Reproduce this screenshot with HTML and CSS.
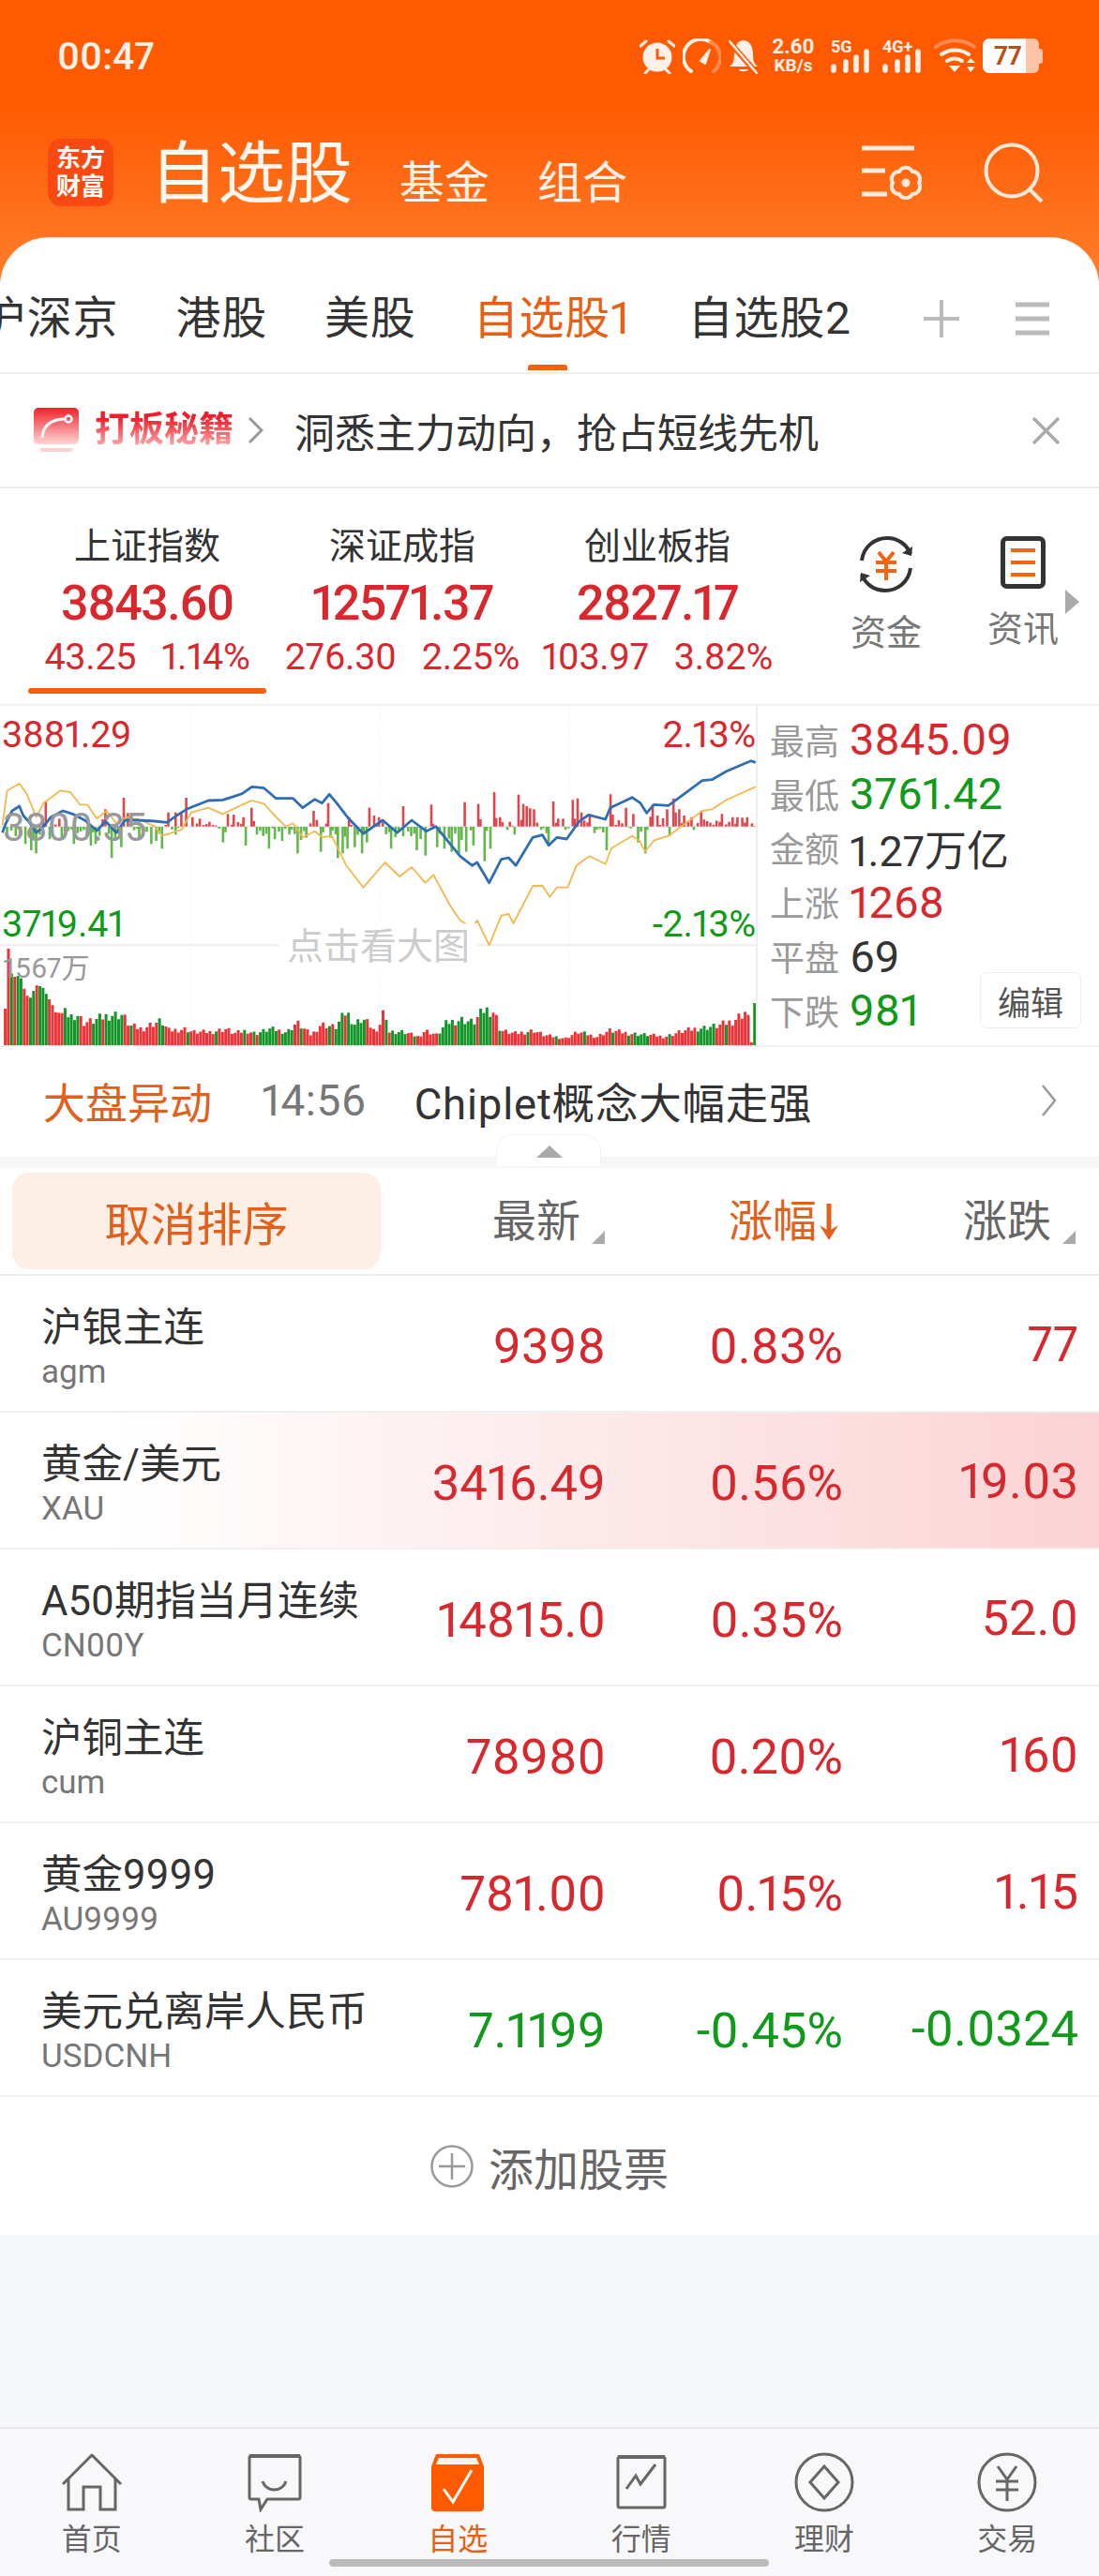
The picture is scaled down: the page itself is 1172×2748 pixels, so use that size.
FILE: index.html
```html
<!DOCTYPE html>
<html lang="zh-CN">
<head>
    <meta charset="UTF-8">
    <meta name="viewport" content="width=device-width, initial-scale=1.0">
    <title>自选股</title>
    <link rel="stylesheet" href="styles.css">
</head>
<body>
<div class="app">
    <div class="status-bar">
        <span class="clock">00:47</span>
        <div class="status-icons">
            <svg width="38" height="38" viewBox="0 0 38 38"><circle cx="19" cy="20" r="15.5" fill="#fff1ea"/><path d="M19 11v10h8" fill="none" stroke="#ff5a00" stroke-width="3"/><path d="M1 8l6-5M37 8l-6-5M6 37l4-4M32 37l-4-4" stroke="#fff1ea" stroke-width="3" stroke-linecap="round"/></svg>
            <svg class="gauge" width="41" height="38" viewBox="0 0 41 38"><path d="M9 35A18.500 18.500 0 0 1 30 4" fill="none" stroke="#fff1ea" stroke-width="4" stroke-linecap="round"/><path d="M30 4A18.500 18.500 0 0 1 33 35" fill="none" stroke="#ff8a50" stroke-width="4" stroke-linecap="round"/><path d="M19 24l10-12-5 15z" fill="#fff1ea" stroke="#fff1ea" stroke-width="2" stroke-linejoin="round"/></svg>
            <svg class="bell" width="32" height="38" viewBox="0 0 32 38"><path d="M1 30c4-3 5-6 5-14C6 7 11 2 16 2s10 5 10 14c0 8 1 11 5 14z" fill="#fff1ea"/><path d="M11 33h10c-1 3-9 3-10 0z" fill="#fff1ea"/><path d="M1 4l29 33" stroke="#ff5a00" stroke-width="6"/><path d="M1 3l29 34" stroke="#fff1ea" stroke-width="2.500" stroke-linecap="round"/></svg>
            <div class="net-speed"><span>2.60</span><span class="net-unit">KB/s</span></div>
            <svg class="signal" width="43" height="38" viewBox="0 0 43 38"><text x="0" y="15" class="signal-label">5G</text><path d="M3 30v4M16 25v9M27 20v14M38 14v20" stroke="#fff1ea" stroke-width="5.500" stroke-linecap="round"/></svg>
            <svg class="signal" width="43" height="38" viewBox="0 0 43 38"><text x="0" y="15" class="signal-label">4G+</text><path d="M3 30v4M16 25v9M27 20v14M38 14v20" stroke="#fff1ea" stroke-width="5.500" stroke-linecap="round"/></svg>
            <svg class="wifi" width="45" height="38" viewBox="0 0 45 38"><path d="M2 9c12-9 29-9 41 0" fill="none" stroke="#ff8a50" stroke-width="4" stroke-linecap="round"/><path d="M8 17c9-6 20-6 29 0M14 24c5-3 11-3 16 0" fill="none" stroke="#fff1ea" stroke-width="4" stroke-linecap="round"/><path d="M16 29h12l-6 7zM35 26l4-5 5 5zM35 30h9l-5 6z" fill="#fff1ea"/></svg>
            <div class="battery"><div class="battery-level">77</div><div class="battery-rest"></div><div class="battery-nib"></div></div>
        </div>
    </div>

    <div class="title-bar">
        <div class="logo"><span>东方</span><span>财富</span></div>
        <h1 class="page-title">自选股</h1>
        <span class="title-link">基金</span>
        <span class="title-link">组合</span>
        <div class="title-actions">
            <svg width="64" height="58" viewBox="0 0 64 58"><path d="M0 3h56M0 27h25M0 52h27" stroke="#ffeadd" stroke-width="5"/><g transform="translate(47 40)"><path d="M14 0A8 8 0 0 1 7 12A8 8 0 0 1-7 12A8 8 0 0 1-14 0A8 8 0 0 1-7-12A8 8 0 0 1 7-12A8 8 0 0 1 14 0z" fill="none" stroke="#ffeadd" stroke-width="4"/><circle r="4.500" fill="#ffeadd"/></g></svg>
            <svg width="64" height="64" viewBox="0 0 64 64"><circle cx="30" cy="30" r="27.500" fill="none" stroke="#ffeadd" stroke-width="4"/><path d="M49 50l13 13" stroke="#ffeadd" stroke-width="4"/></svg>
        </div>
    </div>

    <div class="card">
        <div class="tabs">
            <div class="tabs-list">
                <span class="tab">沪深京</span>
                <span class="tab">港股</span>
                <span class="tab">美股</span>
                <span class="tab active">自选股1</span>
                <span class="tab">自选股2</span>
            </div>
            <svg class="tab-add" width="40" height="40" viewBox="0 0 40 40"><path d="M20 0v40M1 20h38" stroke="#bbb" stroke-width="4"/></svg>
            <svg class="tab-menu" width="36" height="36" viewBox="0 0 36 36"><path d="M0 3h36M0 18h36M0 33h36" stroke="#bbb" stroke-width="5"/></svg>
        </div>

        <div class="promo">
            <svg class="promo-icon" width="48" height="48" viewBox="0 0 48 48"><defs><linearGradient id="promo-fill" x1="0" y1="0" x2="0" y2="1"><stop offset="0" stop-color="#f0202a"/><stop offset="1" stop-color="#ffd6d6"/></linearGradient></defs><rect width="48" height="39" rx="5" fill="url(#promo-fill)"/><rect x="7" y="43" width="34" height="4" rx="2" fill="#fbd0d0"/><path d="M9 32c1-12 8-20 25-20" fill="none" stroke="#fff" stroke-width="3"/><circle cx="37" cy="12" r="3.500" fill="none" stroke="#fff" stroke-width="2.500"/></svg>
            <span class="promo-brand">打板秘籍</span>
            <svg class="promo-arrow" width="17" height="30" viewBox="0 0 17 30"><path d="M2 2l13 13L2 28" fill="none" stroke="#999" stroke-width="3"/></svg>
            <span class="promo-text">洞悉主力动向，抢占短线先机</span>
            <svg class="promo-close" width="29" height="29" viewBox="0 0 29 29"><path d="M1 1l27 27M28 1L1 28" stroke="#aaa" stroke-width="3.500"/></svg>
        </div>

        <div class="indexes">
            <div class="index-item active">
                <div class="index-name">上证指数</div>
                <div class="index-value">3843.60</div>
                <div class="index-change"><span>43.25</span><span>1.14%</span></div>
            </div>
            <div class="index-item">
                <div class="index-name">深证成指</div>
                <div class="index-value">12571.37</div>
                <div class="index-change"><span>276.30</span><span>2.25%</span></div>
            </div>
            <div class="index-item">
                <div class="index-name">创业板指</div>
                <div class="index-value">2827.17</div>
                <div class="index-change"><span>103.97</span><span>3.82%</span></div>
            </div>
            <div class="index-tool tool-funds">
                <svg width="58" height="60" viewBox="0 0 58 60"><path d="M3 26C5 10 18 2 30 2c12 0 21 7 25 17M55 34C53 50 40 58 28 58 16 58 7 51 3 41" fill="none" stroke="#333" stroke-width="4"/><path d="M46 18l10 3 1-10zM12 42L2 39 1 49z" fill="#333"/><path d="M21 17l8 10 8-10M18 28h22M18 37h22M29 27v20" fill="none" stroke="#f5640f" stroke-width="4"/></svg>
                <span>资金</span>
            </div>
            <div class="index-tool tool-news">
                <svg width="48" height="56" viewBox="0 0 48 56"><rect x="2.500" y="2.500" width="43" height="51" rx="4" fill="none" stroke="#333" stroke-width="5"/><path d="M11 15h26M11 28h26M11 41h26" stroke="#f5640f" stroke-width="4"/></svg>
                <span>资讯</span>
            </div>
            <div class="tool-more"></div>
        </div>

        <div class="market">
            <div class="chart" id="chart">
                <span class="chart-label top-left up">3881.29</span>
                <span class="chart-label top-right up">2.13%</span>
                <span class="chart-label mid-left">3800.35</span>
                <span class="chart-label low-left down">3719.41</span>
                <span class="chart-label low-right down">-2.13%</span>
                <span class="chart-hint">点击看大图</span>
                <span class="chart-volume">1567万</span>
            </div>
            <div class="stats">
                <div class="stat"><span class="stat-name">最高</span><span class="up">3845.09</span></div>
                <div class="stat"><span class="stat-name">最低</span><span class="down">3761.42</span></div>
                <div class="stat"><span class="stat-name">金额</span><span class="stat-amount">1.27万亿</span></div>
                <div class="stat"><span class="stat-name">上涨</span><span class="up">1268</span></div>
                <div class="stat"><span class="stat-name">平盘</span><span>69</span></div>
                <div class="stat"><span class="stat-name">下跌</span><span class="down">981</span></div>
                <button class="edit-button">编辑</button>
            </div>
        </div>

        <div class="alert">
            <span class="alert-tag">大盘异动</span>
            <span class="alert-time">14:56</span>
            <span class="alert-text">Chiplet概念大幅走强</span>
            <svg width="17" height="34" viewBox="0 0 17 34"><path d="M2 1l13 16L2 33" fill="none" stroke="#999" stroke-width="2.500"/></svg>
            <div class="collapse-tab"></div>
        </div>

        <div class="table-head">
            <button class="cancel-sort">取消排序</button>
            <div class="col-head sortable">最新</div>
            <div class="col-head sorted">涨幅<svg width="22" height="42" viewBox="0 0 22 42"><path d="M11 2v34" stroke="#e0601c" stroke-width="5"/><path d="M1 25l10 16 10-16-10 6z" fill="#e0601c"/></svg></div>
            <div class="col-head sortable">涨跌</div>
        </div>

        <div class="quote">
            <div class="quote-name"><div>沪银主连</div><div class="quote-code">agm</div></div>
            <div class="quote-num up">9398</div>
            <div class="quote-num up">0.83%</div>
            <div class="quote-num up quote-change">77</div>
        </div>
        <div class="quote flash">
            <div class="quote-name"><div>黄金/美元</div><div class="quote-code">XAU</div></div>
            <div class="quote-num up">3416.49</div>
            <div class="quote-num up">0.56%</div>
            <div class="quote-num up quote-change">19.03</div>
        </div>
        <div class="quote">
            <div class="quote-name"><div>A50期指当月连续</div><div class="quote-code">CN00Y</div></div>
            <div class="quote-num up">14815.0</div>
            <div class="quote-num up">0.35%</div>
            <div class="quote-num up quote-change">52.0</div>
        </div>
        <div class="quote">
            <div class="quote-name"><div>沪铜主连</div><div class="quote-code">cum</div></div>
            <div class="quote-num up">78980</div>
            <div class="quote-num up">0.20%</div>
            <div class="quote-num up quote-change">160</div>
        </div>
        <div class="quote">
            <div class="quote-name"><div>黄金9999</div><div class="quote-code">AU9999</div></div>
            <div class="quote-num up">781.00</div>
            <div class="quote-num up">0.15%</div>
            <div class="quote-num up quote-change">1.15</div>
        </div>
        <div class="quote">
            <div class="quote-name"><div>美元兑离岸人民币</div><div class="quote-code">USDCNH</div></div>
            <div class="quote-num down">7.1199</div>
            <div class="quote-num down">-0.45%</div>
            <div class="quote-num down quote-change">-0.0324</div>
        </div>

        <div class="add-stock">
            <svg width="46" height="46" viewBox="0 0 46 46"><circle cx="23" cy="23" r="21.500" fill="none" stroke="#999" stroke-width="2.500"/><path d="M23 9v28M9 23h28" stroke="#999" stroke-width="2.500"/></svg>
            <span>添加股票</span>
        </div>
    </div>

    <div class="spacer"></div>

    <nav class="bottom-nav">
        <div class="nav-item">
            <svg width="64" height="62" viewBox="0 0 64 62"><path d="M1 33L32 2l31 31" fill="none" stroke="#666" stroke-width="3" stroke-linejoin="round"/><path d="M7 27v33h16V36h18v24h16V27" fill="none" stroke="#666" stroke-width="3"/></svg>
            <span>首页</span>
        </div>
        <div class="nav-item">
            <svg width="60" height="62" viewBox="0 0 60 62"><path d="M5 3h50a2 2 0 0 1 2 2v42a2 2 0 0 1-2 2H22l-7 11-2-11H5a2 2 0 0 1-2-2V5a2 2 0 0 1 2-2z" fill="none" stroke="#666" stroke-width="3"/><path d="M3 3h54" stroke="#666" stroke-width="4"/><path d="M17 30c4 12 21 12 25 0" fill="none" stroke="#666" stroke-width="3"/></svg>
            <span>社区</span>
        </div>
        <div class="nav-item active">
            <svg width="60" height="62" viewBox="0 0 60 62"><path d="M2 14L7 1h46l5 13v44a4 4 0 0 1-4 4H6a4 4 0 0 1-4-4z" fill="#ff5a00"/><path d="M7 12l3-7h40l3 7z" fill="#fff1ea"/><path d="M15 38l10 14 20-34" fill="none" stroke="#fff" stroke-width="3"/></svg>
            <span>自选</span>
        </div>
        <div class="nav-item">
            <svg width="56" height="62" viewBox="0 0 56 62"><rect x="3" y="4" width="50" height="54" rx="2" fill="none" stroke="#666" stroke-width="3"/><path d="M3 4h50" stroke="#666" stroke-width="4"/><path d="M12 38l10-14 5 9 16-21" fill="none" stroke="#666" stroke-width="3"/></svg>
            <span>行情</span>
        </div>
        <div class="nav-item">
            <svg width="64" height="64" viewBox="0 0 64 64"><circle cx="32" cy="32" r="30" fill="none" stroke="#666" stroke-width="3"/><path d="M32 15l15 17-15 17-15-17z" fill="none" stroke="#666" stroke-width="3"/></svg>
            <span>理财</span>
        </div>
        <div class="nav-item">
            <svg width="64" height="64" viewBox="0 0 64 64"><circle cx="32" cy="32" r="30" fill="none" stroke="#666" stroke-width="3"/><path d="M22 15l10 14 10-14M20 31h24M20 40h24M32 29v23" fill="none" stroke="#666" stroke-width="3"/></svg>
            <span>交易</span>
        </div>
        <div class="home-bar"></div>
    </nav>
</div>
<script src="chart.js"></script>
</body>
</html>
```

FILE: styles.css
```css
* {
    box-sizing: border-box;
}
body {
    margin: 0;
    font-family: Roboto, "Noto Sans CJK SC", sans-serif;
    font-variant-numeric: proportional-nums;
    color: #333;
    background: #f6f7f9;
}
.app {
    width: 1172px;
    height: 2748px;
    display: flex;
    flex-direction: column;
    overflow: hidden;
    background: linear-gradient(#ff5a00 0, #ff5a00 110px, #ff7d2c 300px) no-repeat;
    background-size: 100% 300px;
}
.up { color: #d8282d; }
.down { color: #0f9a1a; }

/* status bar */
.status-bar {
    display: flex;
    justify-content: space-between;
    align-items: center;
    height: 37px;
    margin-top: 41px;
    padding: 0 60px 0 61px;
}
.clock {
    font-size: 41px;
    font-weight: 500;
    color: #fff1ea;
}
.status-icons {
    display: flex;
    align-items: center;
    gap: 8px;
}
.net-speed {
    display: flex;
    flex-direction: column;
    align-items: center;
    width: 46px;
    margin: 0 9px 0 6px;
    font-size: 22px;
    font-weight: 700;
    line-height: 20px;
    color: #fff1ea;
}
.net-unit { font-size: 19px; }
.signal {
    margin-right: 4px;
    overflow: visible;
}
.signal-label {
    font-family: Roboto, sans-serif;
    font-size: 18px;
    font-weight: 700;
    fill: #fff1ea;
}
.battery {
    display: flex;
    align-items: center;
    height: 37px;
    margin-left: -1px;
}
.battery-level {
    width: 46px;
    height: 37px;
    padding-left: 12px;
    font-size: 28px;
    font-weight: 700;
    line-height: 37px;
    color: #b8501a;
    background: #fff;
    border-radius: 7px 0 0 7px;
}
.battery-rest {
    width: 14px;
    height: 37px;
    background: #ffc5a8;
    border-radius: 0 6px 6px 0;
}
.battery-nib {
    width: 4px;
    height: 16px;
    background: #ffc5a8;
    border-radius: 0 3px 3px 0;
}

/* title bar */
.title-bar {
    display: flex;
    align-items: center;
    height: 72px;
    margin-top: 70px;
    padding: 0 59px 0 51px;
}
.logo {
    display: flex;
    flex-direction: column;
    align-items: center;
    justify-content: center;
    width: 70px;
    height: 72px;
    font-size: 26px;
    font-weight: 700;
    line-height: 30px;
    color: #fff;
    background: #f84a10;
    border-radius: 14px;
}
.page-title {
    margin: 4px 0 0 39px;
    font-size: 72px;
    font-weight: 400;
    line-height: 72px;
    color: #fff6f0;
}
.title-link {
    margin: 24px 0 0 50px;
    font-size: 48px;
    line-height: 50px;
    color: #fff1e8;
}
.title-link + .title-link {
    margin-left: 51px;
}
.title-actions {
    display: flex;
    align-items: center;
    gap: 66px;
    margin-left: auto;
}

/* card */
.card {
    margin-top: 33px;
    background: #fff;
    border-radius: 52px 52px 0 0;
}
.tabs {
    position: relative;
    display: flex;
    align-items: center;
    height: 146px;
    padding: 30px 53px 0 0;
    border-bottom: 2px solid #eeeeee;
}
.tabs-list {
    display: flex;
    gap: 61px;
    margin-left: -20px;
}
.tab {
    position: relative;
    font-size: 48px;
    line-height: 60px;
    letter-spacing: 0.800px;
    color: #333;
}
.tab.active {
    color: #e8600f;
}
.tab.active::after {
    content: "";
    position: absolute;
    left: 58px;
    bottom: -25px;
    width: 42px;
    height: 6px;
    background: #f5600a;
    border-radius: 3px 3px 0 0;
}
.tab-add {
    margin-left: auto;
}
.tab-menu {
    margin-left: 59px;
}
.promo {
    display: flex;
    align-items: center;
    height: 122px;
    padding: 0 42px 0 36px;
    border-bottom: 2px solid #eee;
}
.promo-brand {
    margin-left: 17px;
    font-size: 37px;
    font-weight: 700;
    line-height: 44px;
    background: linear-gradient(#ee1f2a 20%, #ffb5b5 95%);
    -webkit-background-clip: text;
    background-clip: text;
    color: transparent;
}
.promo-arrow {
    margin-left: 15px;
}
.promo-text {
    margin-left: 33px;
    font-size: 43px;
    color: #333;
}
.promo-close {
    margin-left: auto;
}

/* index strip */
.indexes {
    display: flex;
    height: 232px;
    padding-left: 21px;
    border-bottom: 2px solid #f2f2f2;
}
.index-item {
    position: relative;
    display: flex;
    flex-direction: column;
    align-items: center;
    width: 272px;
    padding-top: 37px;
}
.index-name {
    font-size: 39px;
    line-height: 50px;
}
.index-value {
    margin-top: 5px;
    font-size: 52px;
    font-weight: 500;
    line-height: 62px;
    letter-spacing: -1.500px;
    color: #d8282d;
}
.index-change {
    display: flex;
    gap: 27px;
    margin-top: 4px;
    font-size: 39.500px;
    line-height: 44px;
    letter-spacing: -0.300px;
    color: #d8282d;
}
.index-item.active::after {
    content: "";
    position: absolute;
    left: 9px;
    bottom: 11px;
    width: 254px;
    height: 6px;
    background: #f5600a;
    border-radius: 3px;
}
.index-tool {
    display: flex;
    flex-direction: column;
    align-items: center;
    padding-top: 51px;
    font-size: 38px;
    color: #777;
}
.index-tool span {
    margin-top: 21px;
    line-height: 44px;
}
.tool-funds {
    margin-left: 70px;
}
.tool-news {
    margin-left: 70px;
}
.tool-more {
    width: 0;
    height: 0;
    margin: 108px 0 0 7px;
    border-left: 15px solid #aaa;
    border-top: 13px solid transparent;
    border-bottom: 13px solid transparent;
}

/* chart and stats */
.market {
    display: flex;
    height: 364px;
    border-bottom: 2px solid #f2f2f2;
}
.chart {
    position: relative;
    width: 808px;
    border-right: 2px solid #eee;
}
.chart svg {
    display: block;
}
.chart-label {
    position: absolute;
    font-size: 39.500px;
    line-height: 44px;
    letter-spacing: -0.300px;
}
.top-left { left: 2px; top: 9px; }
.top-right { right: 0; top: 9px; }
.mid-left { left: 3px; top: 108px; color: #999; font-size: 42px; }
.low-left { left: 2px; top: 211px; }
.low-right { right: 0; top: 211px; }
.chart-hint {
    position: absolute;
    left: 298px;
    top: 232px;
    padding: 0 8px;
    font-size: 39px;
    line-height: 50px;
    color: #ccc;
    background: #fff;
}
.chart-volume {
    position: absolute;
    left: 3px;
    top: 262px;
    font-size: 30px;
    line-height: 36px;
    color: #999;
}
.stats {
    position: relative;
    flex: 1;
    padding: 7px 0 0 13px;
}
.stat {
    display: flex;
    align-items: center;
    height: 57.800px;
    font-size: 47px;
    color: #333;
}
.stat-name {
    width: 85px;
    font-size: 37px;
    color: #999;
}
.stat-amount {
    font-size: 45px;
}
.edit-button {
    position: absolute;
    right: 19px;
    bottom: 18px;
    width: 108px;
    height: 60px;
    padding: 0;
    font-family: inherit;
    font-size: 35px;
    color: #555;
    background: #fff;
    border: 1px solid #eee;
    border-radius: 7px;
}

/* alert row */
.alert {
    position: relative;
    display: flex;
    align-items: center;
    height: 129px;
    padding: 0 45px 3px 46px;
    border-bottom: 12px solid #f5f6f8;
}
.alert svg {
    margin-left: auto;
}
.alert-tag {
    font-size: 45px;
    color: #e0601c;
}
.alert-time {
    margin-left: 53px;
    font-size: 46px;
    letter-spacing: 0.500px;
    color: #777;
}
.alert-text {
    margin-left: 51px;
    font-size: 45.500px;
    letter-spacing: 0.800px;
    color: #333;
}
.collapse-tab {
    position: absolute;
    left: 529px;
    bottom: -10px;
    width: 112px;
    height: 34px;
    background: #fff;
    border: 1px solid #f2f2f2;
    border-bottom: 0;
    border-radius: 18px 18px 0 0;
}
.collapse-tab::after {
    content: "";
    position: absolute;
    left: 42px;
    top: 11px;
    border-left: 14px solid transparent;
    border-right: 14px solid transparent;
    border-bottom: 13px solid #aaa;
}

/* table */
.table-head {
    display: grid;
    grid-template-columns: 393px 213px 276px 226px;
    align-items: center;
    height: 115px;
    padding-left: 13px;
    border-bottom: 2px solid #eee;
}
.cancel-sort {
    height: 103px;
    padding: 0;
    font-family: inherit;
    font-size: 49px;
    color: #e0601c;
    background: #fdeee6;
    border: 0;
    border-radius: 18px;
}
.col-head {
    position: relative;
    display: flex;
    align-items: center;
    justify-content: flex-end;
    font-size: 47px;
    line-height: 56px;
    color: #666;
}
.sortable::after {
    content: "";
    position: absolute;
    right: -26px;
    bottom: 4px;
    border-left: 14px solid transparent;
    border-bottom: 14px solid #aaa;
}
.sorted {
    color: #e0601c;
}
.col-head svg {
    margin-left: 2px;
}
.quote {
    display: grid;
    grid-template-columns: 360px 242px 253px 251px;
    align-items: center;
    height: 146px;
    padding: 6px 0 0 44px;
    border-bottom: 2px solid #f0f0f0;
}
.flash {
    background: linear-gradient(90deg, #fff 0, #fff 10%, #fbd3d4 100%);
}
.quote-name {
    white-space: nowrap;
    margin-top: 3px;
    font-size: 43.500px;
    line-height: 53px;
    color: #333;
}
.quote-code {
    font-size: 35px;
    line-height: 42px;
    color: #777;
}
.quote-num {
    font-size: 52.500px;
    line-height: 60px;
    text-align: right;
}
.quote-change {
    margin-top: -4px;
}
.add-stock {
    display: flex;
    align-items: center;
    justify-content: center;
    gap: 16px;
    height: 147px;
    font-size: 48px;
    color: #666;
}

/* bottom nav */
.spacer {
    flex: 1;
    background: #f6f7f9;
}
.bottom-nav {
    position: relative;
    display: grid;
    grid-template-columns: repeat(6, 1fr);
    height: 159px;
    padding-top: 25px;
    background: #f8f8fb;
    border-top: 2px solid #e8e8ea;
}
.nav-item {
    display: flex;
    flex-direction: column;
    align-items: center;
    font-size: 32px;
    line-height: 40px;
    color: #666;
}
.nav-item svg {
    height: 64px;
}
.nav-item span {
    margin-top: 9px;
}
.nav-item.active {
    color: #e8600f;
}
.home-bar {
    position: absolute;
    left: 351px;
    bottom: 10px;
    width: 469px;
    height: 8px;
    background: #bbb;
    border-radius: 4px;
}
```

FILE: chart.js
```js
// points are [x, y] read off the chart at 1.936 / 3 scale from its top left
const SCALE_X = 1 / 1.936;
const SCALE_Y = 1 / 3;
const TOP_OFFSET = -3; // the chart box starts 3px below the reading origin

const bluePoints = [[5,415],[12,385],[25,345],[40,330],[48,360],[60,380],[75,415],[90,395],[105,365],[130,345],[150,355],[175,375],[200,408],[218,378],[240,415],[258,375],[285,375],[320,378],[345,382],[360,365],[385,340],[430,312],[460,310],[500,290],[520,268],[545,272],[570,305],[605,305],[625,335],[650,308],[665,320],[680,292],[695,320],[720,370],[750,418],[790,375],[820,415],[850,375],[880,410],[900,395],[950,490],[975,520],[985,510],[1010,575],[1035,500],[1050,495],[1065,520],[1100,430],[1120,422],[1133,455],[1150,430],[1170,435],[1195,380],[1215,358],[1250,372],[1260,335],[1305,302],[1322,320],[1335,352],[1350,325],[1380,328],[1450,248],[1470,245],[1500,218],[1550,185],[1560,190]];

const yellowPoints = [[5,390],[15,280],[40,258],[55,290],[75,365],[90,320],[125,280],[145,285],[165,325],[180,325],[200,370],[220,345],[240,385],[260,365],[290,375],[320,395],[335,425],[355,415],[375,405],[395,350],[430,335],[460,355],[500,325],[520,312],[545,322],[570,365],[590,395],[605,385],[625,430],[650,410],[665,430],[685,425],[715,520],[750,590],[795,510],[825,555],[850,525],[878,575],[895,550],[930,650],[950,695],[975,720],[985,695],[1010,775],[1035,680],[1050,675],[1060,705],[1100,585],[1120,585],[1135,620],[1150,590],[1172,590],[1190,520],[1217,490],[1250,515],[1262,465],[1305,425],[1320,440],[1332,475],[1350,440],[1380,425],[1450,345],[1470,340],[1500,310],[1560,268]];

const redFlow = [[92,80],[105,30],[120,25],[215,55],[253,92],[345,45],[360,45],[382,92],[395,30],[410,25],[430,15],[468,40],[480,38],[500,30],[517,60],[645,50],[675,75],[718,30],[760,60],[770,35],[780,30],[830,65],[888,70],[957,78],[985,72],[1018,110],[1030,30],[1050,15],[1068,102],[1078,72],[1085,65],[1092,58],[1100,55],[1140,80],[1150,25],[1160,25],[1180,85],[1190,90],[1198,45],[1215,40],[1258,103],[1275,20],[1290,60],[1305,40],[1345,70],[1355,35],[1375,55],[1388,90],[1400,55],[1410,35],[1425,30],[1445,50],[1488,40],[1510,30],[1520,30],[1530,28],[1540,30],[1550,10]];

const greenFlow = [[12,35],[30,30],[50,55],[62,75],[72,85],[100,40],[125,40],[150,55],[185,60],[195,55],[228,100],[248,65],[285,40],[310,55],[320,45],[332,70],[360,25],[458,50],[505,60],[528,25],[553,70],[565,40],[580,45],[595,25],[612,85],[630,35],[660,80],[680,35],[695,100],[705,85],[715,70],[730,65],[745,85],[755,50],[805,70],[830,30],[858,75],[876,92],[900,65],[915,70],[930,80],[945,85],[960,80],[975,60],[998,110],[1010,70],[1045,10],[1060,25],[1115,10],[1130,60],[1165,10],[1225,20],[1250,75],[1300,5],[1315,50],[1330,85],[1380,30],[1430,10]];

// volume outline, [x, height]
const volumeOutline = [[8,120],[14,318],[22,220],[35,225],[42,215],[50,165],[60,155],[72,195],[85,190],[95,160],[103,140],[112,108],[130,105],[145,95],[155,105],[170,75],[190,80],[205,90],[225,100],[250,100],[265,65],[290,55],[310,70],[330,80],[345,50],[380,55],[395,45],[430,45],[465,55],[480,40],[505,50],[525,40],[555,55],[590,45],[610,75],[640,35],[660,70],[690,60],[712,110],[730,70],[745,90],[760,70],[775,40],[792,128],[800,45],[830,45],[860,30],[875,50],[900,35],[920,75],[950,85],[975,75],[998,118],[1018,110],[1030,50],[1060,40],[1100,50],[1120,35],[1165,25],[1190,45],[1230,30],[1255,50],[1300,40],[1340,35],[1370,30],[1400,45],[1430,55],[1480,65],[1510,80],[1540,115],[1548,5],[1558,188]];

// x ranges where volume bars are mostly green
const greenRuns = [[20,45],[55,90],[130,160],[190,250],[325,335],[520,600],[690,755],[800,835],[900,1012],[1290,1340],[1440,1472],[1552,1568]];

const FLOW_RED = '#e0474c';
const FLOW_GREEN = '#62b84a';

function px(x) { return x * SCALE_X; }
function py(y) { return y * SCALE_Y + TOP_OFFSET; }

function line(points, color, width) {
    const d = points.map(p => px(p[0]).toFixed(1) + ',' + py(p[1]).toFixed(1)).join(' ');
    return `<polyline points="${d}" fill="none" stroke="${color}" stroke-width="${width}" stroke-linejoin="round"/>`;
}

function flowBar(x, value, color) {
    const h = Math.abs(value) * SCALE_Y;
    const y = value > 0 ? py(395) - h : py(396);
    return `<rect x="${x.toFixed(1)}" y="${y.toFixed(1)}" width="2.600" height="${h.toFixed(1)}" fill="${color}"/>`;
}

function nearest(list, x) {
    let best = list[0];
    list.forEach(b => {
        if (Math.abs(b[0] - x) < Math.abs(best[0] - x)) best = b;
    });
    return best;
}

function outlineAt(x) {
    for (let i = 1; i < volumeOutline.length; i++) {
        const a = volumeOutline[i - 1];
        const b = volumeOutline[i];
        if (x <= b[0]) {
            return a[1] + (b[1] - a[1]) * (x - a[0]) / (b[0] - a[0]);
        }
    }
    return 0;
}

function isGreen(x, i) {
    const inRun = greenRuns.some(r => x >= r[0] && x <= r[1]);
    return inRun ? i % 7 !== 3 : i % 9 === 4;
}

function drawChart() {
    let shapes = '';

    // grid
    [204, 405, 607].forEach(x => {
        shapes += `<path d="M${x} 0V364" stroke="#f4f4f4" stroke-width="1" stroke-dasharray="3 3"/>`;
    });
    shapes += `<path d="M0 ${py(775)}H806" stroke="#eee" stroke-width="2"/>`;
    shapes += `<path d="M0 ${py(396)}H806" stroke="#ddd" stroke-width="1"/>`;

    // money flow: the bars that stand out, then low filler bars between them
    redFlow.forEach(b => { shapes += flowBar(px(b[0]), b[1], FLOW_RED); });
    greenFlow.forEach(b => { shapes += flowBar(px(b[0]), -b[1], FLOW_GREEN); });
    for (let i = 0, x = 8; x < 1556; i++, x += 6.5) {
        const red = nearest(redFlow, x);
        const green = nearest(greenFlow, x);
        if (Math.abs(red[0] - x) < 4 || Math.abs(green[0] - x) < 4) continue;
        const isRed = Math.abs(red[0] - x) < Math.abs(green[0] - x);
        const base = isRed ? red[1] : green[1];
        const h = base * (0.12 + ((i * 13) % 17) * 0.025);
        shapes += isRed ? flowBar(px(x), h, FLOW_RED) : flowBar(px(x), -h, FLOW_GREEN);
    }

    shapes += line(yellowPoints, '#f3b84d', 1.8);
    shapes += line(bluePoints, '#2f6db5', 2.8);

    // volume
    for (let i = 0, x = 8; x < 1562; i++, x += 6.5) {
        const jitter = 1 + ((i * 37) % 11 - 5) * 0.035;
        const h = outlineAt(x) * (x < 130 ? 1 : jitter);
        const color = isGreen(x, i) ? '#12962a' : '#ee3338';
        shapes += `<rect x="${px(x).toFixed(1)}" y="${py(1098 - h).toFixed(1)}" width="3" height="${(h * SCALE_Y).toFixed(1)}" fill="${color}"/>`;
    }

    const chart = document.getElementById('chart');
    chart.insertAdjacentHTML('afterbegin', `<svg width="806" height="362" viewBox="0 0 806 362">${shapes}</svg>`);
}

drawChart();
```
